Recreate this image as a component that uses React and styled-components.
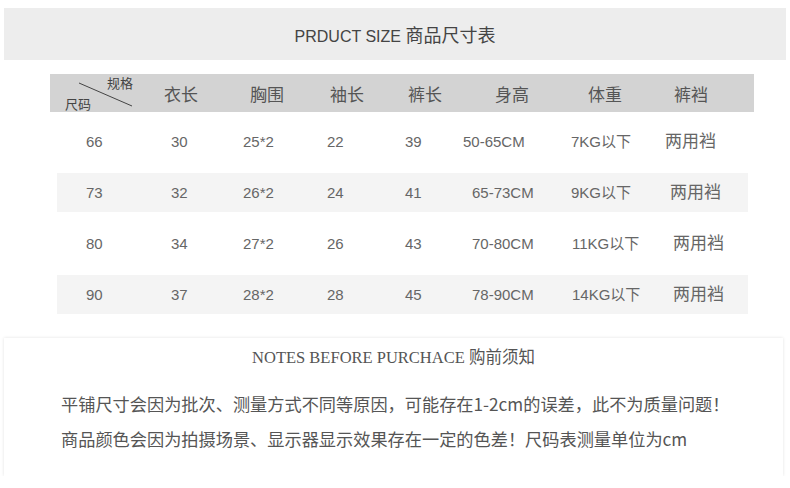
import React from "react";
import styled, { createGlobalStyle } from "styled-components";

const Global = createGlobalStyle`
  html, body { margin: 0; padding: 0; background: #ffffff; }
  body { font-family: "Liberation Sans", "Noto Sans CJK SC", sans-serif; }
`;

const Page = styled.div`
  width: 790px;
  padding-top: 8px;
  display: flex;
  flex-direction: column;
`;

const Banner = styled.div`
  margin: 0 4px;
  height: 52px;
  background: #ededed;
  display: flex;
  align-items: center;
  justify-content: center;
`;

const Title = styled.div`
  font-family: "Liberation Sans", "Noto Sans CJK SC", sans-serif;
  font-size: 16px;
  color: #444;
  white-space: nowrap;
`;

const TitleCjk = styled.span`
  font-family: "Noto Sans CJK SC", sans-serif;
  font-size: 18px;
`;

const Table = styled.div`
  margin: 14px 0 0 50px;
  width: 704px;
`;

const HeaderRow = styled.div`
  display: grid;
  grid-template-columns: 114px 86px 80px 78px 87px 93px 86px 80px;
  height: 38px;
  align-items: center;
  background: #d3d3d3;
`;

const HeadCell = styled.div`
  font-family: "Noto Sans CJK SC", sans-serif;
  font-size: 17px;
  line-height: 1;
  color: #555;
  white-space: nowrap;
`;

const DiagCell = styled.div`
  position: relative;
  height: 38px;
  display: flex;
  flex-direction: column;
  padding-top: 2px;
  box-sizing: border-box;
`;

const DiagLabel = styled.div`
  font-family: "Noto Sans CJK SC", sans-serif;
  font-size: 13px;
  line-height: 14px;
  color: #444;
  margin-left: ${(p) => p.$left}px;
  margin-top: ${(p) => p.$top || 0}px;
  white-space: nowrap;
`;

const DiagLine = styled.svg`
  position: absolute;
  left: 0;
  top: 0;
  pointer-events: none;
`;

const Rows = styled.div`
  margin: 10px 0 0 7px;
  width: 691px;
  display: flex;
  flex-direction: column;
  gap: 12px;
`;

const DataRow = styled.div`
  display: grid;
  grid-template-columns: 85px 72px 84px 78px 67px 99px 101px 76px;
  padding-left: 29px;
  height: 39px;
  align-items: center;
  background: ${(p) => (p.$striped ? "#f4f4f4" : "transparent")};
`;

const Cell = styled.div`
  font-family: "Liberation Sans", "Noto Sans CJK SC", sans-serif;
  font-size: ${(p) => (p.$cjk ? 17 : 15)}px;
  line-height: 1;
  color: #666;
  white-space: nowrap;
  margin-left: ${(p) => p.$shift || 0}px;
`;

const Notes = styled.div`
  margin: 24px 7px 0 4px;
  background: #fff;
  box-shadow: 0 0 3px rgba(0, 0, 0, 0.12);
  padding: 10px 0 20px;
`;

const NotesTitle = styled.div`
  text-align: center;
  font-family: "Liberation Serif", "Noto Sans CJK SC", serif;
  font-size: 16.5px;
  line-height: 20px;
  color: #555;
  white-space: nowrap;
`;

const NotesBody = styled.div`
  margin-top: 18px;
  padding-left: 57px;
`;

const NotesLine = styled.div`
  font-family: "Noto Sans CJK SC", sans-serif;
  font-size: 17.2px;
  line-height: 35px;
  color: #555;
  white-space: nowrap;
`;

const headers = ["衣长", "胸围", "袖长", "裤长", "身高", "体重", "裤裆"];

const rows = [
  { v: ["66", "30", "25*2", "22", "39", "50-65CM", "7KG以下", "两用裆"], shifts: [0, 0, 0, 0, 0, -9, 0, -7] },
  { v: ["73", "32", "26*2", "24", "41", "65-73CM", "9KG以下", "两用裆"], shifts: [0, 0, 0, 0, 0, 0, 0, -2] },
  { v: ["80", "34", "27*2", "26", "43", "70-80CM", "11KG以下", "两用裆"], shifts: [0, 0, 0, 0, 0, 0, 1, 1] },
  { v: ["90", "37", "28*2", "28", "45", "78-90CM", "14KG以下", "两用裆"], shifts: [0, 0, 0, 0, 0, 0, 1, 1] },
];

export default function App() {
  return (
    <>
      <Global />
      <Page>
        <Banner>
          <Title>
            PRDUCT SIZE <TitleCjk>商品尺寸表</TitleCjk>
          </Title>
        </Banner>
        <Table>
          <HeaderRow>
            <DiagCell>
              <DiagLine width="114" height="38" viewBox="0 0 114 38">
                <line x1="29" y1="9" x2="82" y2="32" stroke="#444" strokeWidth="1" />
              </DiagLine>
              <DiagLabel $left={57}>规格</DiagLabel>
              <DiagLabel $left={15} $top={7}>尺码</DiagLabel>
            </DiagCell>
            {headers.map((h) => (
              <HeadCell key={h}>{h}</HeadCell>
            ))}
          </HeaderRow>
          <Rows>
            {rows.map((r, i) => (
              <DataRow key={i} $striped={i % 2 === 1}>
                {r.v.map((val, j) => (
                  <Cell key={j} $shift={r.shifts[j]} $cjk={j === 7}>
                    {val}
                  </Cell>
                ))}
              </DataRow>
            ))}
          </Rows>
        </Table>
        <Notes>
          <NotesTitle>NOTES BEFORE PURCHACE 购前须知</NotesTitle>
          <NotesBody>
            <NotesLine>平铺尺寸会因为批次、测量方式不同等原因，可能存在1-2cm的误差，此不为质量问题！</NotesLine>
            <NotesLine>商品颜色会因为拍摄场景、显示器显示效果存在一定的色差！尺码表测量单位为cm</NotesLine>
          </NotesBody>
        </Notes>
      </Page>
    </>
  );
}
